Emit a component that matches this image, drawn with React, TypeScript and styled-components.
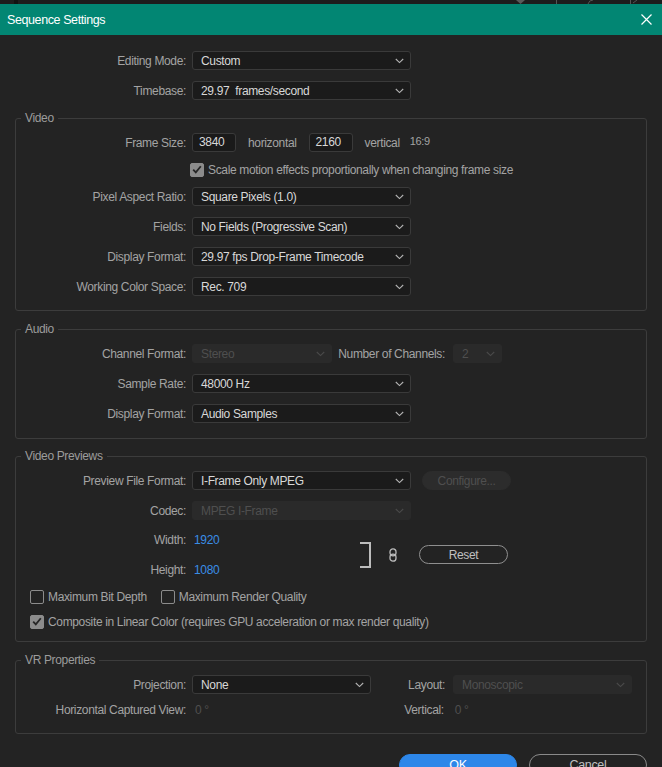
import styled, { createGlobalStyle } from "styled-components";

const GlobalStyle = createGlobalStyle`
  * { box-sizing: border-box; }
  html, body {
    margin: 0;
    padding: 0;
    height: 767px;
    overflow: hidden;
    background: #232323;
  }
  body {
    font-family: "Liberation Sans", Arial, sans-serif;
    font-size: 12px;
    letter-spacing: -0.35px;
    color: #a3a3a3;
  }
`;

const TopStrip = styled.div`
    height: 4px;
    background: #1d1d1d;
    svg { display: block; }
`

const TitleBar = styled.div`
    display: flex;
    align-items: center;
    justify-content: space-between;
    height: 31px;
    padding: 0 10px 0 7px;
    background: #028673;
    color: #ffffff;
    font-size: 12.5px;
    letter-spacing: -0.4px;
`

const Content = styled.div`
    display: flex;
    flex-direction: column;
    padding: 16px 15px 0 15px;
`

const Stack = styled.div`
    display: flex;
    flex-direction: column;
    gap: 11px;
`

const TopRows = styled(Stack)`
    padding-left: 1px;
`

const Group = styled.fieldset<{ $pb?: number; $mt?: number }>`
    margin: ${({ $mt }) => $mt ?? 11}px 0 0 0;
    padding: 8px 0 ${({ $pb }) => $pb ?? 14}px 0;
    border: 1px solid #3c3c3c;
    border-radius: 3px;
    min-width: 0;
`

const Legend = styled.legend`
    margin-left: 5px;
    padding: 0 4px;
    line-height: 14px;
    color: #9c9c9c;
`

const Row = styled.div<{ $mt?: number; $pl?: number }>`
    display: flex;
    align-items: center;
    height: 19px;
    margin-top: ${({ $mt }) => $mt ?? 0}px;
    padding-left: ${({ $pl }) => $pl ?? 0}px;
    white-space: nowrap;
`

const Label = styled.span<{ $w?: number }>`
    flex: none;
    width: ${({ $w }) => $w ?? 170}px;
    margin-right: ${({ $w }) => ($w ? 8 : 6)}px;
    text-align: right;
    color: #a3a3a3;
`

const SelectBox = styled.div<{ $w: number; $disabled?: boolean }>`
    display: flex;
    align-items: center;
    justify-content: space-between;
    flex: none;
    width: ${({ $w }) => $w}px;
    height: 19px;
    padding: 0 6px 0 8px;
    border-radius: 3px;
    border: 1px solid ${({ $disabled }) => ($disabled ? "#2a2a2a" : "#3a3a3a")};
    background: ${({ $disabled }) => ($disabled ? "#2a2a2a" : "#1b1b1b")};
    color: ${({ $disabled }) => ($disabled ? "#4f4f4f" : "#d8d8d8")};
    span { white-space: pre; }
`

const NumBox = styled.div`
    flex: none;
    width: 44px;
    height: 19px;
    line-height: 17px;
    padding-left: 6px;
    border-radius: 3px;
    border: 1px solid #3a3a3a;
    background: #1a1a1a;
    color: #d8d8d8;
`

const Unit = styled.span`
    margin: 0 12px;
    color: #a3a3a3;
`

const Ratio = styled.span`
    margin: -3px 0 0 -2px;
    font-size: 11px;
    color: #a3a3a3;
`

const Value = styled.span<{ $blue?: boolean }>`
    margin-left: ${({ $blue }) => ($blue ? 2 : 3)}px;
    color: ${({ $blue }) => ($blue ? "#3a8de6" : "#4f4f4f")};
`

const Box = styled.span<{ $checked?: boolean }>`
    display: inline-flex;
    align-items: center;
    justify-content: center;
    flex: none;
    width: 14px;
    height: 14px;
    border-radius: 2px;
    border: 1.5px solid #8c8c8c;
    background: ${({ $checked }) => ($checked ? "#8c8c8c" : "transparent")};
`

const CheckLabel = styled.span`
    display: inline-flex;
    align-items: center;
    gap: 4px;
    margin-right: 14px;
    color: #a3a3a3;
`

const PillButton = styled.div<{ $disabled?: boolean }>`
    display: flex;
    align-items: center;
    justify-content: center;
    flex: none;
    width: 89px;
    height: 19px;
    margin-left: ${({ $disabled }) => ($disabled ? 11 : 0)}px;
    border-radius: 10px;
    border: 1px solid ${({ $disabled }) => ($disabled ? "#2c2c2c" : "#8f8f8f")};
    background: ${({ $disabled }) => ($disabled ? "#2c2c2c" : "transparent")};
    color: ${({ $disabled }) => ($disabled ? "#4f4f4f" : "#c0c0c0")};
`

const SizeBlock = styled.div`
    display: flex;
    align-items: center;
    margin-top: -1px;
`

const SizeRows = styled(Stack)`
    width: 344px;
`

const Bracket = styled.span`
    width: 11px;
    height: 26px;
    border: 2px solid #bcbcbc;
    border-left: none;
`

const LinkIcon = styled.svg`
    margin: 0 22px 0 18px;
`

const Footer = styled.div`
    display: flex;
    justify-content: flex-end;
    gap: 12px;
    margin-top: 20px;
`

const DialogButton = styled.div<{ $primary?: boolean }>`
    display: flex;
    align-items: center;
    justify-content: center;
    width: 118px;
    height: 22px;
    border-radius: 11px;
    font-size: 12.5px;
    border: 1.5px solid ${({ $primary }) => ($primary ? "#2d87e9" : "#8a8a8a")};
    background: ${({ $primary }) => ($primary ? "#2d87e9" : "transparent")};
    color: ${({ $primary }) => ($primary ? "#ffffff" : "#c0c0c0")};
`

const Chevron = ({ color }: { color: string }) => (
    <svg width="9" height="6" viewBox="0 0 9 6">
        <path d="M0.8 1 L4.5 4.6 L8.2 1" fill="none" stroke={color} strokeWidth="1.1" />
    </svg>
)

const Select = ({ value, width = 219, disabled }: { value: string; width?: number; disabled?: boolean }) => (
    <SelectBox $w={width} $disabled={disabled}>
        <span>{value}</span>
        <Chevron color={disabled ? "#4a4a4a" : "#b4b4b4"} />
    </SelectBox>
)

const Check = ({ checked, children }: { checked?: boolean; children: string }) => (
    <CheckLabel>
        <Box $checked={checked}>
            {checked && (
                <svg width="10" height="9" viewBox="0 0 10 9">
                    <path d="M1.2 4.6 L3.8 7.4 L8.8 1.2" fill="none" stroke="#262626" strokeWidth="1.8" />
                </svg>
            )}
        </Box>
        {children}
    </CheckLabel>
)

const App = () => {
    return (
        <>
            <GlobalStyle />
            <TopStrip>
                <svg width="662" height="4">
                    <rect x="14" y="0" width="4" height="4" fill="#121212" />
                    <path d="M516 0 L525 0 L520.5 4 Z" fill="#5a5a5a" />
                    <rect x="556" y="0" width="1" height="4" fill="#555" />
                    <path d="M588 4 Q589 0 593 0" fill="none" stroke="#555" />
                    <rect x="630" y="0" width="1" height="4" fill="#555" />
                    <path d="M633 3 L637 0" stroke="#555" />
                </svg>
            </TopStrip>
            <TitleBar>
                <span>Sequence Settings</span>
                <svg width="11" height="11" viewBox="0 0 11 11">
                    <path d="M0.5 0.5 L10.5 10.5 M10.5 0.5 L0.5 10.5" stroke="#ffffff" strokeWidth="1.2" />
                </svg>
            </TitleBar>
            <Content>
                <TopRows>
                    <Row>
                        <Label>Editing Mode:</Label>
                        <Select value="Custom" />
                    </Row>
                    <Row>
                        <Label>Timebase:</Label>
                        <Select value="29.97  frames/second" />
                    </Row>
                </TopRows>

                <Group>
                    <Legend>Video</Legend>
                    <Stack>
                        <Row>
                            <Label>Frame Size:</Label>
                            <NumBox>3840</NumBox>
                            <Unit>horizontal</Unit>
                            <NumBox>2160</NumBox>
                            <Unit>vertical</Unit>
                            <Ratio>16:9</Ratio>
                        </Row>
                        <Row $mt={-3} $pl={174}>
                            <Check checked>Scale motion effects proportionally when changing frame size</Check>
                        </Row>
                        <Row $mt={-3}>
                            <Label>Pixel Aspect Ratio:</Label>
                            <Select value="Square Pixels (1.0)" />
                        </Row>
                        <Row>
                            <Label>Fields:</Label>
                            <Select value="No Fields (Progressive Scan)" />
                        </Row>
                        <Row>
                            <Label>Display Format:</Label>
                            <Select value="29.97 fps Drop-Frame Timecode" />
                        </Row>
                        <Row>
                            <Label>Working Color Space:</Label>
                            <Select value="Rec. 709" />
                        </Row>
                    </Stack>
                </Group>

                <Group $pb={15}>
                    <Legend>Audio</Legend>
                    <Stack>
                        <Row>
                            <Label>Channel Format:</Label>
                            <Select value="Stereo" width={140} disabled />
                            <Label $w={113}>Number of Channels:</Label>
                            <Select value="2" width={49} disabled />
                        </Row>
                        <Row>
                            <Label>Sample Rate:</Label>
                            <Select value="48000 Hz" />
                        </Row>
                        <Row>
                            <Label>Display Format:</Label>
                            <Select value="Audio Samples" />
                        </Row>
                    </Stack>
                </Group>

                <Group $pb={10} $mt={10}>
                    <Legend>Video Previews</Legend>
                    <Stack>
                        <Row>
                            <Label>Preview File Format:</Label>
                            <Select value="I-Frame Only MPEG" />
                            <PillButton $disabled>Configure...</PillButton>
                        </Row>
                        <Row>
                            <Label>Codec:</Label>
                            <Select value="MPEG I-Frame" disabled />
                        </Row>
                        <SizeBlock>
                            <SizeRows>
                                <Row>
                                    <Label>Width:</Label>
                                    <Value $blue>1920</Value>
                                </Row>
                                <Row>
                                    <Label>Height:</Label>
                                    <Value $blue>1080</Value>
                                </Row>
                            </SizeRows>
                            <Bracket />
                            <LinkIcon width="8" height="14" viewBox="0 0 8 14">
                                <rect x="1" y="0.8" width="6" height="7" rx="3" fill="none" stroke="#bcbcbc" strokeWidth="1.3" />
                                <rect x="1" y="6.2" width="6" height="7" rx="3" fill="none" stroke="#bcbcbc" strokeWidth="1.3" />
                            </LinkIcon>
                            <PillButton>Reset</PillButton>
                        </SizeBlock>
                        <Row $mt={-3} $pl={14}>
                            <Check>Maximum Bit Depth</Check>
                            <Check>Maximum Render Quality</Check>
                        </Row>
                        <Row $mt={-5} $pl={14}>
                            <Check checked>Composite in Linear Color (requires GPU acceleration or max render quality)</Check>
                        </Row>
                    </Stack>
                </Group>

                <Group>
                    <Legend>VR Properties</Legend>
                    <Stack>
                        <Row>
                            <Label>Projection:</Label>
                            <Select value="None" width={179} />
                            <Label $w={74}>Layout:</Label>
                            <Select value="Monoscopic" width={179} disabled />
                        </Row>
                        <Row $mt={-5}>
                            <Label>Horizontal Captured View:</Label>
                            <Value>0 °</Value>
                            <Label $w={235}>Vertical:</Label>
                            <Value>0 °</Value>
                        </Row>
                    </Stack>
                </Group>

                <Footer>
                    <DialogButton $primary>OK</DialogButton>
                    <DialogButton>Cancel</DialogButton>
                </Footer>
            </Content>
        </>
    )
}

export default App;
